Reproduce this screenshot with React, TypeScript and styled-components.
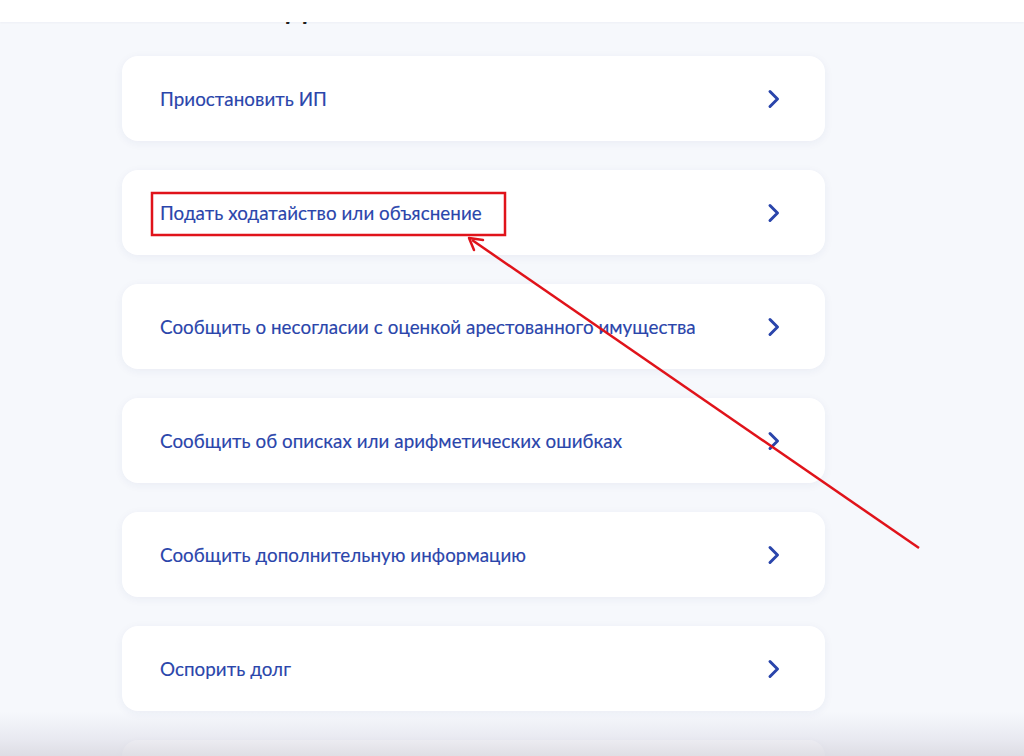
import React from 'react';
import styled, { createGlobalStyle } from 'styled-components';

const GlobalStyle = createGlobalStyle`
  html, body {
    margin: 0;
    padding: 0;
    background: #f6f8fc;
    font-family: Lato, "Noto Sans", sans-serif;
    overflow: hidden;
  }
`;

const Page = styled.div`
  position: relative;
  width: 1024px;
  height: 756px;
  overflow: hidden;
  background: #f6f8fc;
`;

const Header = styled.div`
  position: absolute;
  top: 0;
  left: 0;
  right: 0;
  height: 22px;
  background: #ffffff;
  box-shadow: 0 1px 2px rgba(0, 20, 80, 0.04);
  z-index: 2;
`;

const TitleStrip = styled.div`
  height: 26px;
  overflow: hidden;
  padding-left: 286px;
`;

const Title = styled.h1`
  margin: 0;
  margin-top: -3px;
  font-size: 26px;
  line-height: 26px;
  font-weight: 700;
  color: #1f1f1f;
`;

const List = styled.div`
  display: flex;
  flex-direction: column;
  gap: 29px;
  width: 703px;
  margin: 30px 0 0 122px;
`;

const Card = styled.a`
  display: flex;
  align-items: center;
  justify-content: space-between;
  height: 85px;
  box-sizing: border-box;
  padding: 0 44px 0 38px;
  background: #ffffff;
  border-radius: 16px;
  box-shadow: 0 2px 10px rgba(30, 50, 120, 0.06);
  text-decoration: none;
  cursor: pointer;
`;

const Label = styled.span`
  font-size: 18.8px;
  font-weight: 400;
  color: #2a45ab;
  letter-spacing: 0.05px;
  -webkit-text-stroke: 0.15px #2a45ab;
`;

const Chevron = styled.svg`
  width: 14px;
  height: 20px;
  flex-shrink: 0;
`;

const Annotation = styled.svg`
  position: absolute;
  top: 0;
  left: 0;
  width: 1024px;
  height: 756px;
  pointer-events: none;
  z-index: 3;
`;

const BottomFade = styled.div`
  position: absolute;
  left: 0;
  right: 0;
  bottom: 0;
  height: 44px;
  background: linear-gradient(
    to bottom,
    rgba(225, 226, 236, 0) 0%,
    rgba(222, 222, 232, 0.55) 60%,
    rgba(215, 214, 222, 0.8) 100%
  );
  z-index: 2;
`;

const items = [
  'Приостановить ИП',
  'Подать ходатайство или объяснение',
  'Сообщить о несогласии с оценкой арестованного имущества',
  'Сообщить об описках или арифметических ошибках',
  'Сообщить дополнительную информацию',
  'Оспорить долг',
  '',
];

const ArrowRight = () => (
  <Chevron viewBox="0 0 14 20" fill="none">
    <path
      d="M3 2.5 L10.5 10 L3 17.5"
      stroke="#2a45ab"
      strokeWidth="3"
      strokeLinecap="round"
      strokeLinejoin="round"
    />
  </Chevron>
);

export default function App() {
  return (
    <Page>
      <GlobalStyle />
      <Header />
      <TitleStrip>
        <Title>Действия</Title>
      </TitleStrip>
      <List>
        {items.map((text, i) => (
          <Card key={i}>
            <Label>{text}</Label>
            {text && <ArrowRight />}
          </Card>
        ))}
      </List>
      <BottomFade />
      <Annotation viewBox="0 0 1024 756">
        <rect x="152" y="193" width="353" height="42" fill="none" stroke="#e0131a" strokeWidth="2.5" />
        <line x1="919" y1="548" x2="472" y2="240" stroke="#e0131a" strokeWidth="2.5" />
        <path d="M469 238 L483 240 M469 238 L474 250" stroke="#e0131a" strokeWidth="2.5" strokeLinecap="round" />
      </Annotation>
    </Page>
  );
}
